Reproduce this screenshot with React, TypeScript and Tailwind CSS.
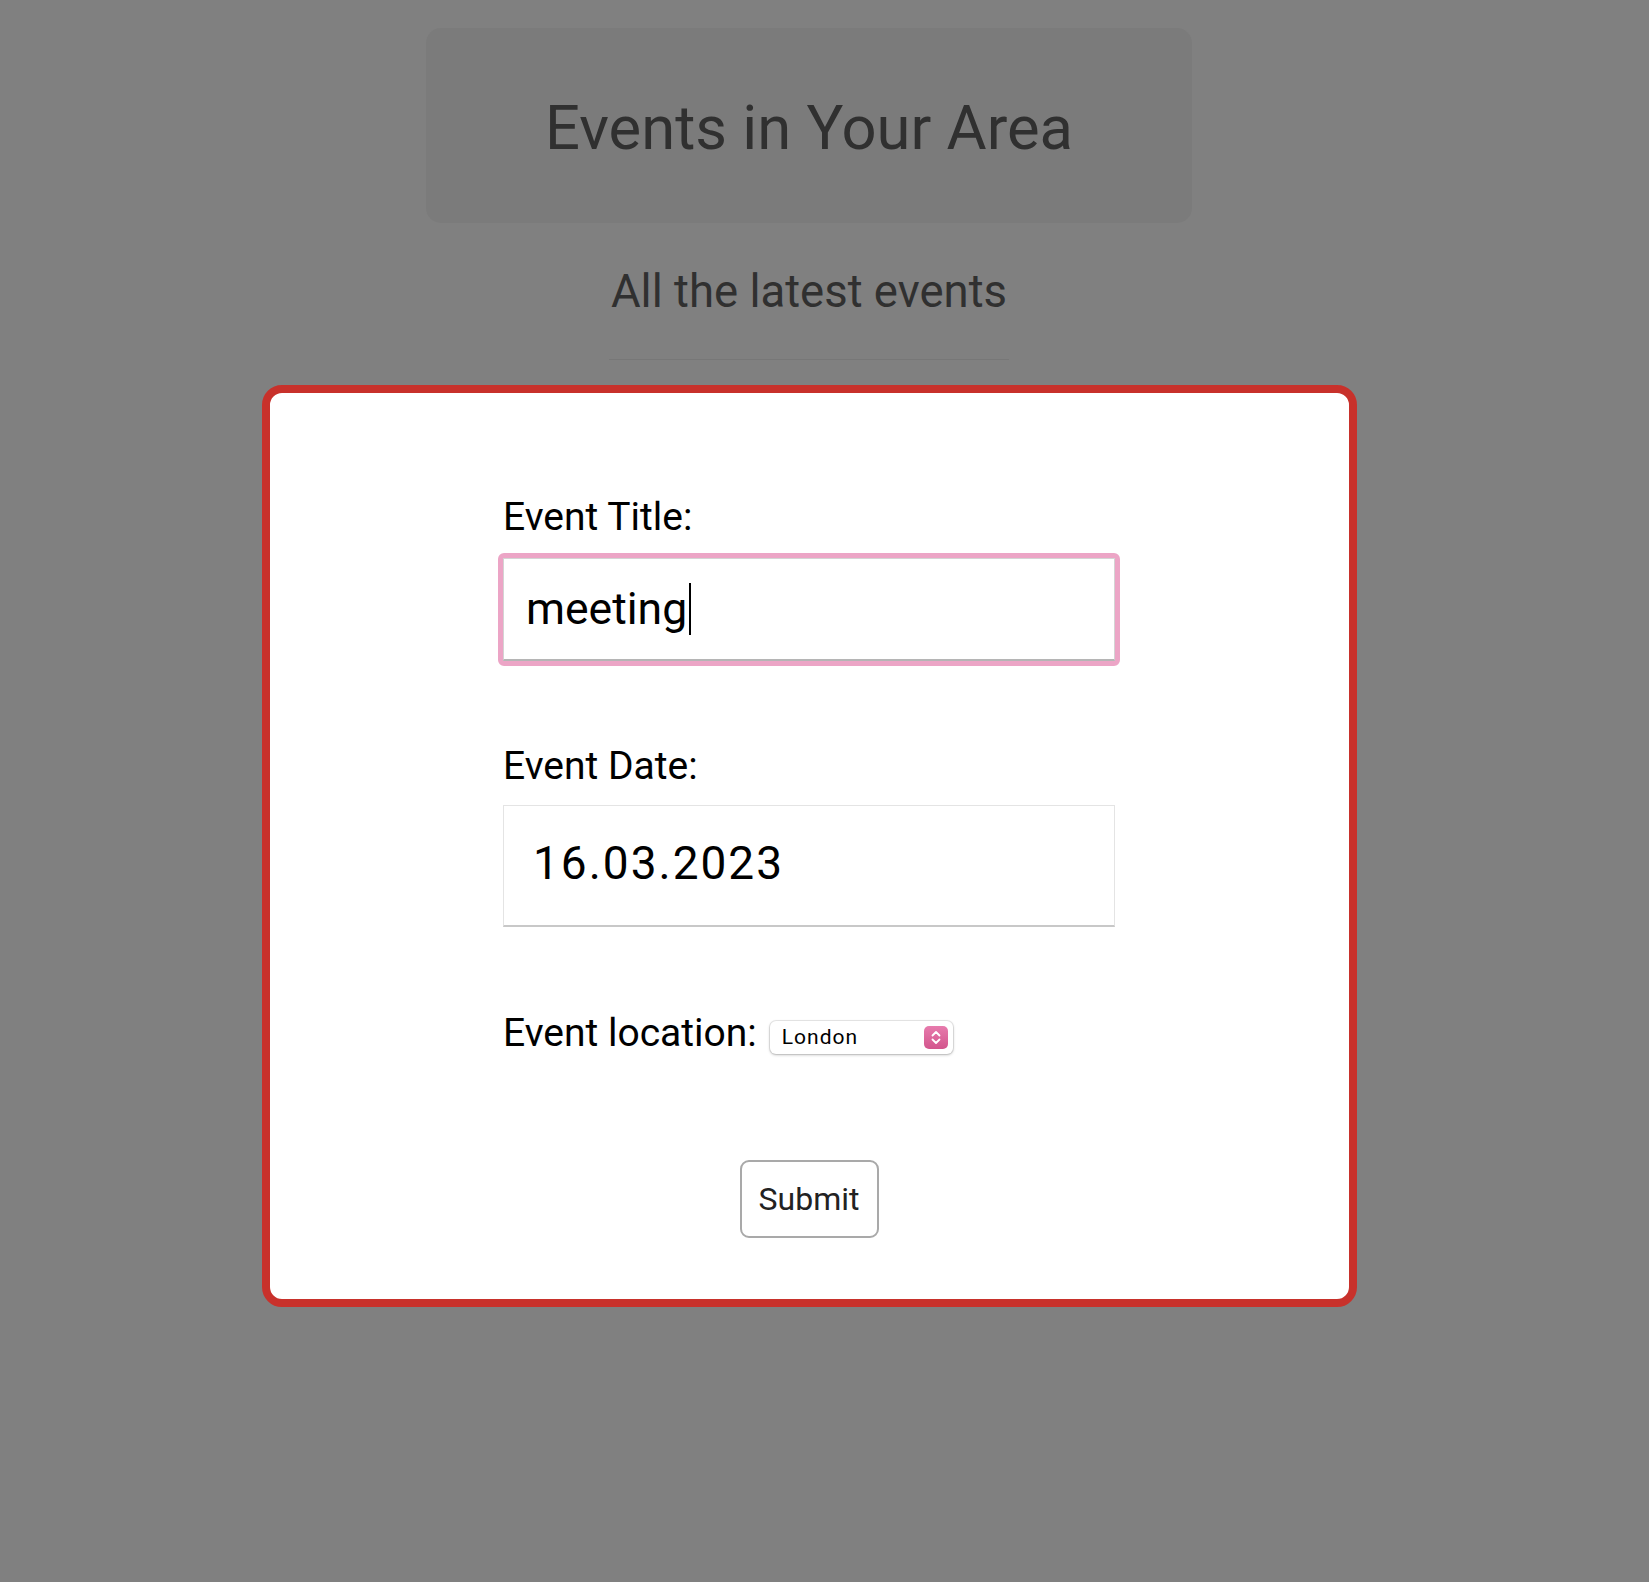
import * as React from "react";

// Event form shown on top of the dimmed events page.

function Stepper() {
  return (
    <span className="flex h-[23px] w-[24px] items-center justify-center rounded-[5px] bg-gradient-to-b from-[#e77bad] to-[#d3558d]">
      <svg width="12" height="17" viewBox="0 0 12 17" fill="none" aria-hidden="true">
        <path d="M2.5 6.5 L6 3 L9.5 6.5" stroke="#fff" strokeWidth="1.8" strokeLinecap="round" strokeLinejoin="round" />
        <path d="M2.5 10.5 L6 14 L9.5 10.5" stroke="#fff" strokeWidth="1.8" strokeLinecap="round" strokeLinejoin="round" />
      </svg>
    </span>
  );
}

function FieldLabel({ children }: { children: React.ReactNode }) {
  return <label className="block text-[39px] leading-[47px] text-black">{children}</label>;
}

export default function App() {
  return (
    <div className="min-h-[1582px] w-full bg-[#808080] font-['Roboto',sans-serif]">
      <div className="flex w-[1618px] flex-col items-center">
        {/* Page header (behind the overlay) */}
        <header className="mt-[28px] flex h-[195px] w-[766px] items-center justify-center rounded-[15px] bg-[#7b7b7b] pt-[6px]">
          <h1 className="text-[61.5px] leading-none text-[#303030]">Events in Your Area</h1>
        </header>

        <div className="mt-[42px] border-b border-[#777777] px-[2px] pb-[40px]">
          <h2 className="text-[45.5px] leading-[54px] text-[#303030]">All the latest events</h2>
        </div>

        {/* Modal form */}
        <div className="mt-[25px] w-[1095px] rounded-[20px] border-[8px] border-[#c8312b] bg-white">
          <form className="mx-auto flex w-[612px] flex-col pb-[61px] pt-[101px]">
            <FieldLabel>Event Title:</FieldLabel>
            <div className="-mx-[5px] mt-[12px] rounded-[6px] border-[5px] border-[#eca5c6]">
              <div className="flex h-[103px] items-center border border-[#d4d4d4] border-b-2 border-b-[#b5b5b5] pl-[22px]">
                <span className="text-[44.5px] leading-none text-black">meeting</span>
                <span className="ml-[2px] h-[52px] w-[2px] bg-black" />
              </div>
            </div>

            <div className="mt-[77px]">
              <FieldLabel>Event Date:</FieldLabel>
            </div>
            <div className="mt-[15px] flex h-[122px] items-center border border-[#e4e4e4] border-b-2 border-b-[#c8c8c8] pb-[6px] pl-[29px]">
              <span className="text-[46px] leading-none tracking-[2px] text-black">16.03.2023</span>
            </div>

            <div className="mt-[83px] flex items-start gap-[13px]">
              <FieldLabel>Event location:</FieldLabel>
              <div className="mt-[11px] flex h-[33px] w-[183px] items-center justify-between rounded-[6px] bg-white pl-[12px] pr-[5px] shadow-[0_0_0_1px_rgba(0,0,0,0.08),0_1px_3px_rgba(0,0,0,0.25)]">
                <span className="text-[21px] leading-none tracking-[1px] text-black">London</span>
                <Stepper />
              </div>
            </div>

            <button
              type="button"
              className="mx-auto mt-[103px] h-[78px] w-[139px] rounded-[9px] border-2 border-[#a9a9a9] bg-white text-[32px] leading-none text-[#222222]"
            >
              Submit
            </button>
          </form>
        </div>
      </div>
    </div>
  );
}
